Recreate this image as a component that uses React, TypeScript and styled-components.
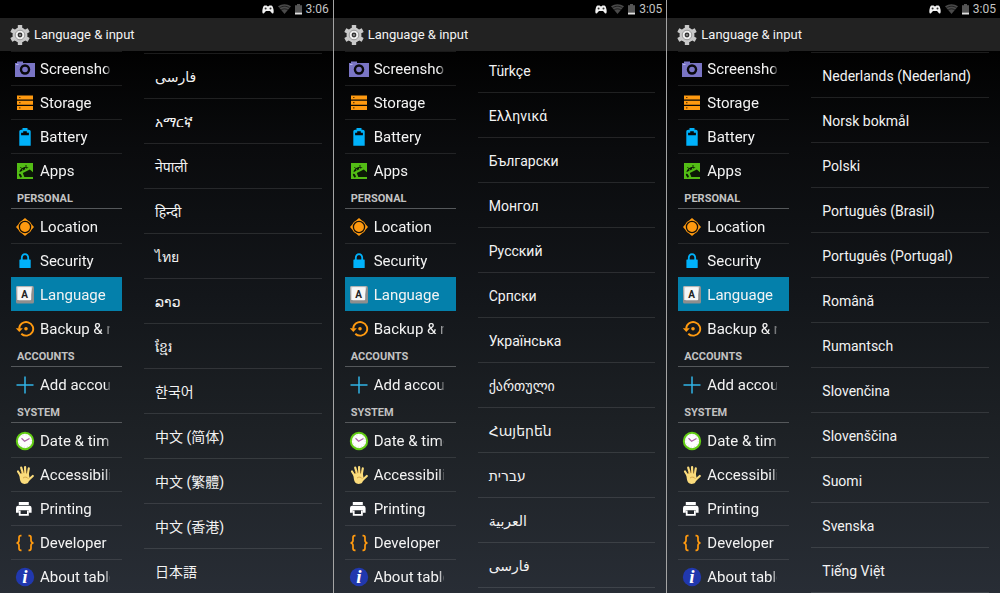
import React from "react";
import styled, { createGlobalStyle, css } from "styled-components";

const GlobalStyle = createGlobalStyle`
  *, *::before, *::after { box-sizing: border-box; }
  body {
    margin: 0;
    background: #000;
    color: #f3f3f3;
    font-family: Roboto, "Noto Sans", "DejaVu Sans", "Noto Sans CJK SC", sans-serif;
  }
`;

const Page = styled.main`
  display: grid;
  grid-template-columns: repeat(3, minmax(0, 1fr));
  gap: 1px;
  min-height: 100vh;
  background: #a4a4a4;
`;

const Tablet = styled.section`
  display: flex;
  flex-direction: column;
  background: #000;
`;

const StatusBar = styled.div`
  display: flex;
  align-items: center;
  justify-content: flex-end;
  gap: 4px;
  height: 18px;
  padding-right: 4px;
  font-size: 12px;
  line-height: 18px;
  color: #c4c4c4;
`;

const Header = styled.header`
  display: flex;
  align-items: center;
  gap: 4px;
  height: 33px;
  padding-left: 10px;
  background: #222;
`;

const Title = styled.h1`
  margin: 0;
  font-size: 13px;
  font-weight: 400;
  line-height: 20px;
`;

const Content = styled.div`
  flex: 1;
  display: grid;
  grid-template-columns: minmax(0, 5fr) minmax(0, 8fr);
  gap: 22px;
  padding: 0 11px;
  overflow: hidden;
  background: linear-gradient(#010101, #0a0b0d 18%, #13161a 45%, #1d2125 70%, #282d35);
`;

const Group = styled.ul`
  margin: 0;
  padding: 0;
  list-style: none;
`;

const GroupTitle = styled.h2`
  height: 22px;
  margin: 0;
  padding: 1px 0 0 6px;
  border-bottom: 1px solid #55585b;
  font-size: 11px;
  font-weight: 700;
  line-height: 22px;
  color: #c2c2c2;
`;

const NavLink = styled.a<{ $divided: boolean; $active: boolean }>`
  display: flex;
  align-items: center;
  gap: 5px;
  height: 34px;
  padding: 1px 12px 0 4px;
  border-top: 1px solid ${(p) => (p.$divided ? "rgba(255,255,255,0.1)" : "transparent")};
  color: inherit;
  text-decoration: none;
  ${(p) =>
    p.$active &&
    css`
      background: #0480ab;
      border-top-color: #0480ab;
    `}
`;

const NavLabel = styled.span`
  flex: 1;
  min-width: 0;
  overflow: hidden;
  white-space: nowrap;
  font-size: 15px;
  line-height: 24px;
  mask-image: linear-gradient(to right, #000 calc(100% - 5px), rgba(0, 0, 0, 0.2));
`;

const Icon = styled.svg`
  flex: none;
  display: block;
  width: 20px;
  height: 20px;
`;

const StatusIcon = styled.svg<{ $width: number }>`
  display: block;
  width: ${(p) => p.$width}px;
  height: 12px;
`;

const LocaleList = styled.ul<{ $scroll: number }>`
  margin: ${(p) => p.$scroll}px 0 0;
  padding: 0;
  list-style: none;
`;

const LocaleItem = styled.li`
  height: 45px;
  border-top: 1px solid rgba(255, 255, 255, 0.11);
  &:last-child {
    box-shadow: 0 1px rgba(255, 255, 255, 0.11);
  }
`;

const LocaleButton = styled.button`
  width: 100%;
  height: 44px;
  padding: 1px 11px 0;
  border: 0;
  background: none;
  color: inherit;
  font: inherit;
  font-size: 14px;
  line-height: 24px;
  text-align: left;
  white-space: nowrap;
`;

const icons: Record<string, React.ReactNode> = {
  camera: (
    <Icon viewBox="0 0 20 20">
      <path d="M0 4h2V2.400h6V4h12v14H0z" fill="#7a75c5" />
      <circle cx="10" cy="10.500" r="5.200" fill="#08080b" />
      <circle cx="10" cy="10.500" r="2.800" fill="#7a75c5" />
      <path d="M1 5.500h2.500" stroke="#b5b2e6" strokeWidth="1" />
    </Icon>
  ),
  storage: (
    <Icon viewBox="0 0 20 20">
      <path d="M2 2.500h16v4H2zM2 7.700h16v4H2zM2 12.900h16v4H2z" fill="#ff9a10" />
      <path d="M4 4.500h1.500M4 9.700h1.500M4 14.900h1.500" stroke="#6b3d00" strokeWidth="1.200" />
    </Icon>
  ),
  battery: (
    <Icon viewBox="0 0 20 20">
      <path d="M7.500 1h5v1.800h1.300c1 0 1.900.8 1.900 1.800v14.100H4.300V4.600c0-1 .9-1.800 1.900-1.800h1.300z" fill="#00b2fb" />
      <path d="M8.200 4.300h3.600v1.500h2.100v2.500H6.100V5.800h2.100z" fill="#06080a" />
    </Icon>
  ),
  apps: (
    <Icon viewBox="0 0 20 20">
      <path d="M2 2h16v16H2z" fill="#53bd15" />
      <path d="M4.500 11.300C4.600 7.700 9 4.500 13.600 6.500z" fill="#0c1a06" />
      <path d="M9.300 16 7.800 12.100l7-3.700 3.200 2.800V16z" fill="#0c1a06" />
      <path d="m5.300 6 1.800 1.800M11 4v2.300" stroke="#0c1a06" strokeWidth="0.900" />
      <path d="m4.900 13.700 1 1.800" stroke="#0c1a06" strokeWidth="2" strokeLinecap="round" />
      <circle cx="7.600" cy="8.900" r="0.700" fill="#53bd15" />
      <circle cx="10.700" cy="7.400" r="0.700" fill="#53bd15" />
    </Icon>
  ),
  location: (
    <Icon viewBox="0 0 20 20">
      <path d="m10 1 2.600 2.200A7.300 7.300 0 0 1 16.800 7.400L19 10l-2.200 2.600a7.300 7.300 0 0 1-4.200 4.200L10 19l-2.600-2.200a7.300 7.300 0 0 1-4.200-4.200L1 10l2.200-2.600a7.300 7.300 0 0 1 4.200-4.200z" fill="#ff9a10" />
      <circle cx="10" cy="10" r="5.600" fill="none" stroke="#14100a" strokeWidth="1.300" />
    </Icon>
  ),
  lock: (
    <Icon viewBox="0 0 20 20">
      <rect x="4.400" y="8.500" width="11.300" height="8.500" rx="0.600" fill="#00b2fb" />
      <path d="M6.800 9V6.500a3.200 3.400 0 0 1 6.400 0V9" fill="none" stroke="#00b2fb" strokeWidth="1.800" />
    </Icon>
  ),
  keyboard: (
    <Icon viewBox="0 0 20 20">
      <rect x="1" y="1" width="18" height="17.500" rx="1.500" fill="#8e8e8e" />
      <path d="M1.500 1.500h16L15 15H2z" fill="#d9d9d9" />
      <rect x="3" y="2.200" width="13.200" height="13" rx="1" fill="#f7f7f7" />
      <text x="9.700" y="12.500" textAnchor="middle" fontFamily="Roboto, sans-serif" fontSize="10" fontWeight="700" fill="#222">
        A
      </text>
    </Icon>
  ),
  backup: (
    <Icon viewBox="0 0 20 20">
      <path d="M4.200 9.600A7 6.800 0 1 1 6.300 14.700" fill="none" stroke="#ff9a10" strokeWidth="1.900" />
      <path d="M0.800 9.300h7L4.300 13z" fill="#ff9a10" />
      <circle cx="11" cy="9.800" r="1.800" fill="#ff9a10" />
    </Icon>
  ),
  add: (
    <Icon viewBox="0 0 20 20">
      <path d="M10 1.500v17M1.500 10h17" stroke="#31b4e6" strokeWidth="1.500" />
    </Icon>
  ),
  clock: (
    <Icon viewBox="0 0 20 20">
      <circle cx="10" cy="10" r="8.200" fill="#fdfdfd" stroke="#62cc14" strokeWidth="2" />
      <circle cx="10" cy="10" r="6.200" fill="none" stroke="#c9c9c9" strokeWidth="0.900" strokeDasharray="0.800 2.450" />
      <path d="M6.500 7.300 9.600 10.300 14.500 7.400" fill="none" stroke="#a861a4" strokeWidth="1.200" />
    </Icon>
  ),
  hand: (
    <Icon viewBox="0 0 20 20">
      <path d="M3 6.500 5.800 11M6.200 2.600 8 9M10.100 2v7M13.800 3.400 12.600 10M17.800 11 14 14.500" fill="none" stroke="#fbdc7c" strokeWidth="2.200" strokeLinecap="round" />
      <path d="M4.400 9.200 7 8l6.800.6.800 4.400 1.400-.5-2.800 5c-1.300 1.900-5.600 1.900-7 .1-1.300-1.900-1.600-5-1.800-8.400z" fill="#fbdc7c" />
      <path d="m7 9-1-2.900M9.100 8.200V5.200M11.700 8.400l.3-2.900M8 13c2-1.400 4-1.200 5.400.8" fill="none" stroke="#c58f35" strokeWidth="0.700" />
    </Icon>
  ),
  print: (
    <Icon viewBox="0 0 20 20">
      <path d="M3.800 3h10v3h-10zM3.200 6.800h11.200a2.200 2.200 0 0 1 2.200 2.200v4.800h-2.800v-2.600h-10v2.600H1V9a2.200 2.200 0 0 1 2.200-2.200z" fill="#fff" />
      <path d="M4.700 11.500v4.300h8.200v-4.300" fill="none" stroke="#fff" strokeWidth="1.800" />
    </Icon>
  ),
  braces: (
    <Icon viewBox="0 0 20 20">
      <g fill="none" stroke="#ff9a10" strokeWidth="1.700">
        <path d="M6.500 2.700H5.800C4.400 2.700 4 3.400 4 4.700V7.600C4 9 3.300 9.900 1.500 10 3.300 10.100 4 11 4 12.400v2.900c0 1.300.4 2 1.800 2h.7" />
        <path d="M13.500 2.700h.7c1.400 0 1.800.7 1.800 2V7.600c0 1.400.7 2.300 2.500 2.400-1.800.1-2.500 1-2.500 2.400v2.900c0 1.300-.4 2-1.800 2h-.7" />
      </g>
    </Icon>
  ),
  info: (
    <Icon viewBox="0 0 20 20">
      <circle cx="10" cy="10" r="9.200" fill="#2138ae" />
      <text x="9.800" y="16" textAnchor="middle" fontFamily="'Liberation Serif', serif" fontSize="19" fontWeight="700" fontStyle="italic" fill="#fff">
        i
      </text>
    </Icon>
  ),
};

const groups = [
  {
    title: "",
    items: [
      ["camera", "Screenshot"],
      ["storage", "Storage"],
      ["battery", "Battery"],
      ["apps", "Apps"],
    ],
  },
  {
    title: "PERSONAL",
    items: [
      ["location", "Location"],
      ["lock", "Security"],
      ["keyboard", "Language & input"],
      ["backup", "Backup & reset"],
    ],
  },
  { title: "ACCOUNTS", items: [["add", "Add account"]] },
  {
    title: "SYSTEM",
    items: [
      ["clock", "Date & time"],
      ["hand", "Accessibility"],
      ["print", "Printing"],
      ["braces", "Developer options"],
      ["info", "About tablet"],
    ],
  },
];

const tablets = [
  {
    time: "3:06",
    scroll: 2,
    locales: [
      ["فارسی", "fa"],
      ["አማርኛ", "am"],
      ["नेपाली", "ne"],
      ["हिन्दी", "hi"],
      ["ไทย", "th"],
      ["ລາວ", "lo"],
      ["ខ្មែរ", "km"],
      ["한국어", "ko"],
      ["中文 (简体)", "zh-CN"],
      ["中文 (繁體)", "zh-TW"],
      ["中文 (香港)", "zh-HK"],
      ["日本語", "ja"],
    ],
  },
  {
    time: "3:05",
    scroll: -4,
    locales: [
      ["Türkçe", "tr"],
      ["Ελληνικά", "el"],
      ["Български", "bg"],
      ["Монгол", "mn"],
      ["Русский", "ru"],
      ["Српски", "sr"],
      ["Українська", "uk"],
      ["ქართული", "ka"],
      ["Հայերեն", "hy"],
      ["עברית", "he"],
      ["العربية", "ar"],
      ["فارسی", "fa"],
    ],
  },
  {
    time: "3:05",
    scroll: 1,
    locales: [
      ["Nederlands (Nederland)", "nl"],
      ["Norsk bokmål", "nb"],
      ["Polski", "pl"],
      ["Português (Brasil)", "pt-BR"],
      ["Português (Portugal)", "pt-PT"],
      ["Română", "ro"],
      ["Rumantsch", "rm"],
      ["Slovenčina", "sk"],
      ["Slovenščina", "sl"],
      ["Suomi", "fi"],
      ["Svenska", "sv"],
      ["Tiếng Việt", "vi"],
    ],
  },
];

const Gear = () => (
  <Icon viewBox="0 0 20 20" aria-hidden="true">
    <g fill="#c9c9c9">
      {[0, 60, 120].map((angle) => (
        <rect key={angle} x="7.800" y="0" width="4.400" height="20" rx="0.600" transform={`rotate(${angle} 10 10)`} />
      ))}
      <circle cx="10" cy="10" r="7.500" />
    </g>
    <circle cx="10" cy="10" r="4.800" fill="#f0f0f0" stroke="#8d8d8d" strokeWidth="0.900" />
    <circle cx="10" cy="10" r="2.400" fill="#333" />
    <circle cx="10" cy="10" r="1" fill="#999" />
  </Icon>
);

const StatusIcons = () => (
  <>
    <StatusIcon $width={12} viewBox="0 0 12 12" aria-hidden="true">
      <path d="M2.700 2.500h2l.6.700h1.400l.6-.7h2c1 0 1.700 1.200 2.200 4 .4 2.400.2 3.800-.8 4-1 .1-1.600-1.500-2.700-2.500H4C2.900 9 2.300 10.600 1.300 10.500.3 10.300.1 8.900.5 6.500 1 3.700 1.700 2.500 2.700 2.500z" fill="#f2f2f2" />
      <circle cx="3.600" cy="5.600" r="1" fill="#333" />
      <circle cx="8.500" cy="5.600" r="1" fill="#333" />
    </StatusIcon>
    <StatusIcon $width={13} viewBox="0 0 13 12" aria-hidden="true">
      <path d="M0 3.300C4 .5 9 .5 13 3.300L6.500 11z" fill="#4a4a4a" />
      <path d="M1.400 4.900c3.200-2.200 7-2.200 10.200 0M3.100 6.900c2.200-1.400 4.600-1.400 6.800 0" fill="none" stroke="#0c0c0c" strokeWidth="0.700" />
    </StatusIcon>
    <StatusIcon $width={7} viewBox="0 0 7 12" aria-hidden="true">
      <path d="M2 1h3v1.200h2V9.500H0V2.200h2z" fill="#555" />
      <path d="M0 9.500h7V11.500H0z" fill="#e0e0e0" />
    </StatusIcon>
  </>
);

export default function App() {
  return (
    <>
      <GlobalStyle />
      <Page>
        {tablets.map((tablet, index) => (
          <Tablet key={index}>
            <StatusBar>
              <StatusIcons />
              <time>{tablet.time}</time>
            </StatusBar>
            <Header>
              <Gear />
              <Title>Language &amp; input</Title>
            </Header>
            <Content>
              <nav>
                {groups.map((group, g) => (
                  <React.Fragment key={g}>
                    {group.title && <GroupTitle>{group.title}</GroupTitle>}
                    <Group>
                      {group.items.map(([icon, label], i) => (
                        <li key={label}>
                          <NavLink
                            href={`#${icon}`}
                            $active={icon === "keyboard"}
                            $divided={icon !== "backup" && (g === 0 || i > 0)}
                          >
                            {icons[icon]}
                            <NavLabel>{label}</NavLabel>
                          </NavLink>
                        </li>
                      ))}
                    </Group>
                  </React.Fragment>
                ))}
              </nav>
              <LocaleList $scroll={tablet.scroll}>
                {tablet.locales.map(([name, lang]) => (
                  <LocaleItem key={lang}>
                    <LocaleButton type="button" lang={lang}>
                      {name}
                    </LocaleButton>
                  </LocaleItem>
                ))}
              </LocaleList>
            </Content>
          </Tablet>
        ))}
      </Page>
    </>
  );
}
